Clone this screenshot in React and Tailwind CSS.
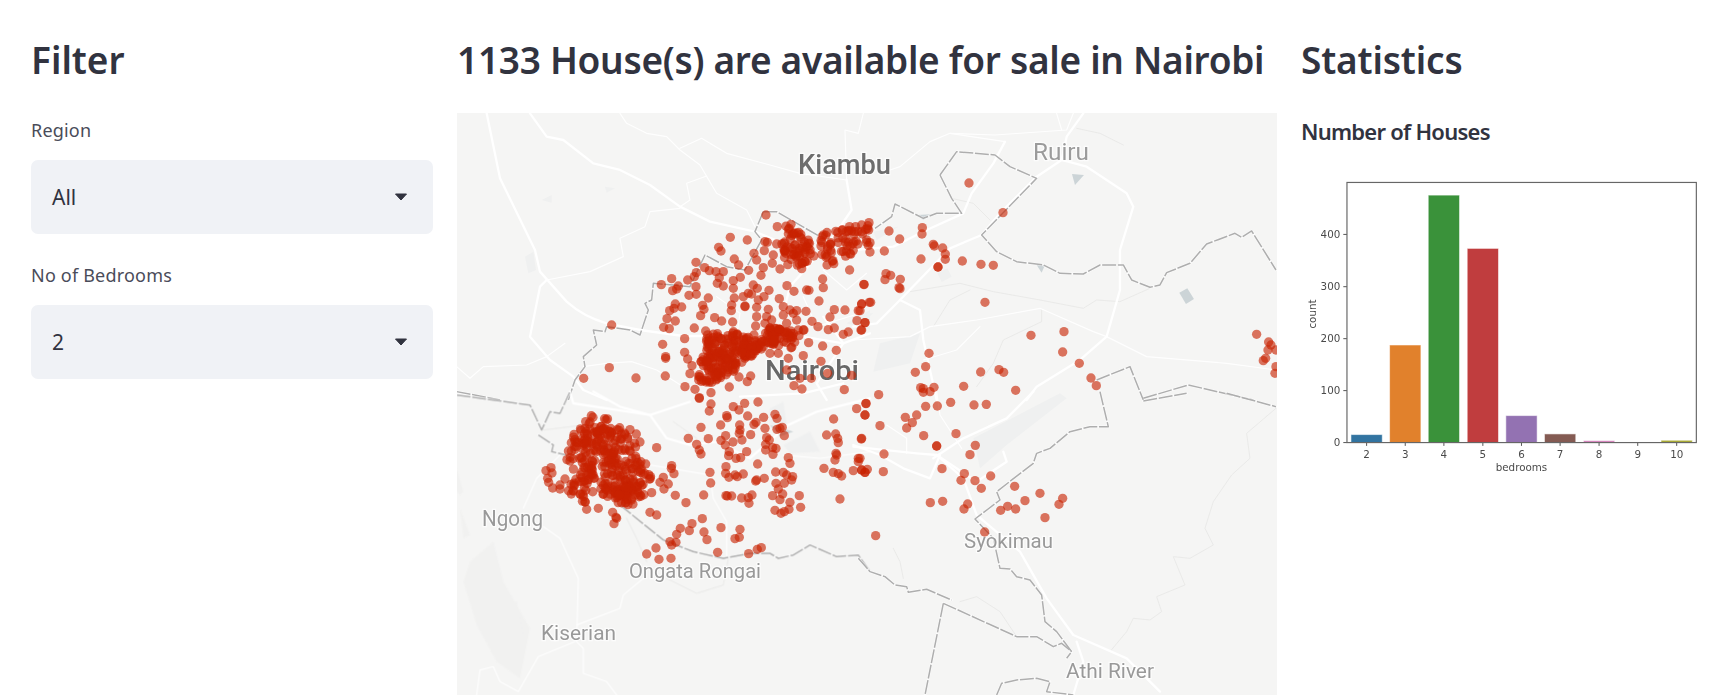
const FONT = 'font-["Noto_Sans",sans-serif]'

// map data is kept in the coordinates of four 3x crops: each crop has its own origin on the page
const CROPS = [
  {
    x: 450,
    y: 100,
    major: [
      'M110,40 L150,235 L255,450 L270,515 L350,605 Q400,650 470,670 L570,690 L700,708 L960,708',
      'M240,40 L290,110 L340,120 L430,190 L510,210 L600,255 L690,320 L780,365 L915,395 L1000,430 L1100,470',
      'M290,540 L270,560 L240,710 L300,780 L370,830 L400,870 L470,900',
      'M1190,240 L1205,330 L1150,410 L1100,470 L1020,560 L1000,640',
      'M1120,650 L1180,730 L1100,850 L1130,900',
      'M1000,700 L1180,730 L1260,700',
      'M870,890 L1060,880 L1180,850',
    ],
    minor: [
      'M290,540 L420,515 L520,470 L510,415 L585,380 L600,335 L690,325',
      'M690,320 L720,300 L710,250 L770,228',
      'M510,40 L530,70 L590,100 L650,110 L690,150 L750,195 L800,280 L890,330 L915,380',
      'M690,145 L755,115 L830,160 L960,195 L1050,220 L1190,240 L1185,90 L1225,100 L1240,40',
      'M400,800 L470,790 L545,785 L620,810 L700,860',
      'M20,800 L60,835 L100,800 L230,795 L290,770 L345,730',
      'M1120,510 L1190,570 L1250,520',
      'M800,590 L870,640 L860,710',
      'M1060,590 L1100,680 L1230,640',
    ],
    border: [
      'M940,335 L980,335 L1110,410',
      'M940,335 L915,395 L935,420 L885,510 L830,500 L765,465 L720,560 L610,550 L605,600 L585,610 L595,630 L570,705 L540,690 L470,680 L465,695 L430,690 L440,735 L400,770 L405,800 L375,840 L355,900',
      'M20,875 L150,900',
    ],
    shapes: [
      'M225,470 L250,455 L258,510 L235,520 Z',
      'M465,260 L495,265 L470,278 Z',
      'M275,300 L305,285 L305,308 Z',
      'M1190,670 L1260,630 L1260,690 Z',
    ],
    points: [
      [948,345],[982,380],[841,412],[892,420],[806,442],[813,453],[853,477],[866,495],[738,487],[764,503],[739,518],[733,530],[713,540],[778,512],[798,515],[820,515],[896,511],[871,532],[933,526],[808,533],[802,550],[820,558],[850,542],[850,565],[910,555],[634,554],[665,536],[668,572],[685,558],[680,567],[717,586],[738,560],[739,583],[775,594],[758,616],[762,628],[676,612],[672,625],[695,621],[659,632],[651,656],[676,663],[641,682],[658,686],[733,684],[752,647],[794,653],[815,663],[848,666],[844,632],[845,615],[853,594],[885,620],[885,618],[880,590],[895,580],[905,582],[922,565],[957,571],[942,590],[925,600],[920,622],[920,650],[917,678],[912,705],[767,693],[704,716],[638,733],[704,757],[647,770],[647,775],[713,777],[726,797],[720,821],[705,860],[478,803],[401,835],[558,834],[646,828],[485,675],[838,861],[867,831],[902,828],[892,845],[783,878],[748,893],[735,868],[988,596],[1011,557],[1032,574],[1070,570],[1077,571],[1107,603],[1118,537],[1120,563],[1199,510],[1242,553],[1235,612],[1258,607],[1225,632],[1185,630],[1153,629],[1140,651],[1221,662],[1245,668],[1233,690],[1153,684],[1135,689],[1180,703],[1195,696],[1104,680],[1086,664],[1062,690],[1047,707],[1076,728],[1118,738],[1159,751],[1060,767],[1113,784],[1133,820],[1205,826],[1183,869],[1084,835],[1056,867],[1032,857],[1050,835],[1000,620],[1020,630],[1040,632],[1068,634],[1000,645],[1030,640],[1040,660],[1010,670],[1045,690],[1060,690],[955,628],[950,650],[965,660],[945,670],[960,690],[945,425],[952,427],[980,432],[943,452],[912,460],[920,480],[970,465],[967,490],[940,503],[990,507],[960,760],[985,760],[1015,775],[1010,810],
    ],
    clusters: [
      { poly: [[735,850],[765,740],[770,705],[850,695],[930,720],[960,680],[1030,690],[1040,745],[950,740],[880,785],[860,810],[780,850]], n: 260, seed: 11 },
      { poly: [[990,450],[1005,360],[1075,410],[1095,480],[1060,510],[1000,490]], n: 65, seed: 5 },
      { poly: [[1110,395],[1200,370],[1260,370],[1260,450],[1190,470],[1140,510],[1110,470]], n: 60, seed: 7 },
    ],
  },
  {
    x: 860,
    y: 100,
    major: [
      'M670,40 L620,110 L605,180 L530,230 L420,340 L365,405 L270,445 L120,600 L50,670 L-20,680',
      'M605,180 L680,200 L800,280 L820,320 L780,450 L780,570 L740,710 L660,780 L530,860 L500,900',
      'M120,600 L180,630 L190,720 L230,900',
      'M435,125 L400,190 L335,280 L310,340 L200,390 L100,440 L-20,450',
    ],
    minor: [
      'M270,100 L405,105 L620,90 L640,40',
      'M435,125 L270,100 L210,125 L120,200 L90,210',
      'M740,710 L860,770 L1100,790 L1248,810',
      'M-20,720 L150,710 L210,680 L350,660 L540,625 L700,695 L740,710',
      'M190,780 L290,750 L360,680',
      'M605,90 L590,40',
    ],
    thin: [
      'M150,575 L300,550 L400,575 L540,600 L670,625 L710,600 L780,605 L870,565',
      'M220,680 L270,600 L330,570',
      'M650,85 L720,100 L790,135',
      'M275,295 L340,310 L390,360',
      'M545,630 L545,665 L430,720 L400,790 L350,860',
    ],
    border: [
      'M240,225 L290,155 L405,165 L450,200 L530,235 L365,405 L410,455 L470,485 L550,495 L600,520 L670,522 L720,495 L790,495 L815,540 L870,562 L900,555 L920,518 L990,490 L1040,432 L1125,400 L1145,412 L1175,393 L1248,510',
      'M240,225 L275,295 L305,340 L230,340 L190,355 L105,312 L95,350 L45,385',
      'M710,840 L810,800 L850,900',
      'M850,895 L985,855 L1180,900',
    ],
    water: [
      'M636,222 L672,225 L645,255 Z',
      'M958,578 L982,565 L1002,597 L978,612 Z',
      'M530,495 L555,495 L545,518 Z',
      'M172,345 L212,343 L190,360 Z',
    ],
    shapes: [
      'M60,730 L180,700 L150,790 L40,815 Z',
      'M232,520 L262,505 L275,530 L245,546 Z',
      'M40,395 L115,380 L50,420 Z',
      'M0,640 L40,640 L15,660 Z',
    ],
    points: [
      [327,249],[429,338],[87,393],[119,417],[187,383],[186,402],[220,433],[223,438],[248,444],[256,462],[256,478],[183,477],[234,501],[234,501],[307,483],[363,493],[400,496],[30,428],[20,427],[30,456],[73,453],[78,521],[92,526],[75,539],[121,538],[117,563],[120,566],[12,554],[32,607],[5,612],[0,632],[15,668],[5,690],[375,607],[513,706],[612,695],[608,756],[658,790],[693,834],[709,857],[207,760],[197,800],[166,817],[362,816],[417,809],[431,817],[467,871],[311,859],[222,862],[182,863],[190,866],[190,877],[210,875],[56,884],[1190,703],[1226,726],[1233,735],[1224,750],[1217,775],[1210,782],[1248,800],[1245,820],[1248,750],[27,368],[5,375],[22,386],[5,395],
    ],
  },
  {
    x: 450,
    y: 395,
    major: [
      'M360,-10 L370,25 L600,60 L650,130 L720,150 L800,140 L900,190 L1015,90 L1100,50 L1260,10',
      'M430,-10 L510,35 L600,60 L720,20',
    ],
    minor: [
      'M600,210 L780,240 L790,310 L830,380 L830,490',
      'M280,395 L330,430 L385,550 L380,740 L400,760 L400,835 L470,860 L500,900',
      'M375,740 L265,785 L205,890 L150,860 L130,815 L90,825 L80,900',
      'M580,550 L520,600 L510,640 L380,690',
      'M330,180 L260,250 L220,340',
      'M1000,180 L1110,190 L1260,170',
    ],
    thin: [
      'M530,370 L560,430 L590,500',
      'M650,550 L740,595 L820,570 L835,490',
      'M670,80 L740,130',
      'M280,105 L400,90',
    ],
    border: [
      'M20,0 L240,30 L275,105 L300,50 L330,55 L360,-10',
      'M265,120 L310,150 L305,170 L350,180',
      'M510,330 L640,435 L730,470 L820,490 L900,475 L960,475 L985,490 L1030,480 L1080,450 L1160,485 L1225,480 L1260,530',
    ],
    water: ['M960,90 L1030,110 L990,125 Z'],
    shapes: [
      'M960,40 L1000,20 L1010,90 L960,90 Z',
      'M1000,150 L1080,110 L1110,170 L1020,175 Z',
    ],
    hills: [
      'M60,500 L130,440 L160,560 L240,700 L210,850 L140,800 L80,690 L40,560 Z',
      'M20,220 L40,290 L30,300 L20,290 Z',
      'M30,340 L60,420 L40,430 Z',
      'M130,640 L200,620 L220,720 L150,790 Z',
    ],
    points: [
      [620,158],[715,130],[775,131],[753,97],[812,90],[830,62],[832,68],[850,35],[867,45],[884,25],[924,21],[893,63],[941,67],[918,82],[912,88],[945,100],[902,119],[869,90],[870,105],[868,115],[876,135],[827,122],[813,136],[826,150],[849,141],[740,148],[748,165],[753,177],[838,170],[836,182],[858,190],[872,188],[890,170],[923,207],[950,128],[958,135],[947,148],[947,165],[968,158],[978,160],[969,178],[975,58],[981,70],[990,100],[997,97],[981,103],[1003,122],[1015,188],[1020,205],[828,215],[827,235],[837,247],[780,232],[782,264],[855,240],[862,245],[880,237],[917,258],[920,255],[943,250],[977,231],[978,265],[1000,232],[1010,240],[1028,245],[1025,255],[1003,265],[985,282],[998,297],[968,302],[990,314],[1048,302],[1020,322],[1052,337],[1017,343],[1003,350],[993,355],[975,346],[761,300],[828,302],[832,303],[845,303],[875,309],[897,325],[895,308],[906,300],[708,323],[676,301],[665,212],[664,220],[672,236],[640,247],[630,262],[655,267],[642,282],[605,293],[600,352],[620,360],[757,371],[726,386],[691,400],[680,418],[718,407],[762,411],[771,434],[813,398],[870,403],[868,427],[855,431],[660,440],[665,450],[678,442],[618,459],[590,477],[627,493],[663,490],[803,472],[896,476],[922,463],[934,458],[1151,72],[1130,120],[1157,117],[1163,130],[1165,143],[1158,175],[1160,180],[1155,195],[1122,220],[1150,232],[1165,236],[1175,243],[1225,190],[1225,200],[1210,227],[1235,225],[1245,232],[1234,132],[1220,41],[1245,60],[1170,312],[1248,25],[748,10],[783,27],[778,48],[410,343],[445,340],[488,352],[498,367],[492,386],[500,370],
      [288,227],[303,218],[306,234],[293,250],[296,262],[308,279],[330,270],[330,282],[345,252],[540,104],[559,117],[570,141],
    ],
    clusters: [
      { poly: [[355,125],[420,60],[490,75],[560,150],[600,230],[610,270],[560,330],[490,330],[440,280],[400,260],[350,200]], n: 230, seed: 3 },
      { poly: [[390,100],[500,100],[530,170],[470,190],[400,170]], n: 45, seed: 9 },
      { poly: [[480,290],[570,250],[580,310],[510,330]], n: 35, seed: 13 },
      { poly: [[340,260],[420,240],[440,300],[400,325],[360,300]], n: 22, seed: 17 },
    ],
  },
  {
    x: 860,
    y: 395,
    major: [
      'M-20,150 L60,180 L130,220 L210,250 L240,180',
      'M-20,155 L170,175 L230,180 L350,260 L440,200 L430,170',
      'M230,180 L310,250 L350,360 L480,470 L560,610 L640,720 L800,790 L900,890',
      'M520,-10 L440,70 L310,130 L220,190',
      'M650,740 L670,800 L640,900',
    ],
    minor: [
      'M230,-10 L240,60 L305,160',
      'M80,90 L140,130 L140,175',
    ],
    thin: [
      'M1248,40 L1160,115 L1170,190 L1115,240 L1060,320 L1035,400 L1060,450 L990,490 L940,485 L975,570 L890,605 L905,650 L870,675 L820,670 L800,710 L750,770',
      'M300,620 L350,605 L420,650 L470,725',
      'M100,460 L120,500 L130,550',
    ],
    border: [
      'M720,-10 L745,95 L690,95 L670,100 L630,110 L570,160 L530,175 L520,205 L410,290 L420,315 L345,372 L400,430 L420,520 L450,522 L470,545 L510,555 L545,600 L555,680 L590,710 L635,770 L620,790',
      'M-5,490 L30,530 L75,545 L105,570 L140,575 L145,592 L200,583 L275,615',
      'M250,625 L470,725 L530,725 L580,755 L605,745 L635,770',
      'M250,625 L195,900',
      'M850,18 L980,-5',
      'M1100,-5 L1248,35',
      'M410,900 L425,865 L470,855 L530,850 L570,860 L560,890 L640,900',
    ],
    shapes: [
      'M340,130 L600,-5 L620,10 L440,150 L360,220 Z',
    ],
    points: [
      [18,26],[15,60],[60,92],[5,130],[136,67],[170,60],[157,83],[140,99],[197,34],[232,33],[272,22],[342,30],[379,28],[191,122],[288,116],[346,151],[330,179],[230,153],[230,153],[72,177],[70,230],[246,221],[313,236],[303,256],[345,257],[364,280],[392,243],[22,223],[15,232],[5,225],[0,190],[211,323],[248,319],[323,327],[312,342],[47,422],[374,411],[464,274],[540,295],[495,317],[443,334],[422,346],[467,342],[608,310],[597,328],[555,368],
    ],
  },
]

const LABELS = [
  { text: 'Kiambu', x: 798, y: 174, w: 93, size: 27, weight: 500, fill: '#6d6d6d' },
  { text: 'Ruiru', x: 1033, y: 160, w: 56, size: 24, weight: 400, fill: '#9b9b9b' },
  { text: 'Nairobi', x: 765, y: 380, w: 94, size: 27, weight: 500, fill: '#686868' },
  { text: 'Ngong', x: 482, y: 526, w: 61, size: 22, weight: 400, fill: '#999999' },
  { text: 'Ongata Rongai', x: 629, y: 578, w: 132, size: 20, weight: 400, fill: '#999999' },
  { text: 'Kiserian', x: 541, y: 640, w: 75, size: 20, weight: 400, fill: '#999999' },
  { text: 'Syokimau', x: 964, y: 548, w: 89, size: 20, weight: 400, fill: '#999999' },
  { text: 'Athi River', x: 1066, y: 678, w: 88, size: 20, weight: 400, fill: '#999999' },
]

const BARS = [
  { label: '2', cx: 257, top: 1003, color: '#3274a1' },
  { label: '3', cx: 373, top: 734, color: '#e1812c' },
  { label: '4', cx: 489, top: 284, color: '#3a923a' },
  { label: '5', cx: 606, top: 444, color: '#c03d3e' },
  { label: '6', cx: 722, top: 946, color: '#9372b2' },
  { label: '7', cx: 838, top: 1001, color: '#845b53' },
  { label: '8', cx: 955, top: 1021, color: '#d684bd' },
  { label: '9', cx: 1071, top: 1027, color: '#7f7f7f' },
  { label: '10', cx: 1188, top: 1020, color: '#a9aa35' },
]

const Y_TICKS = [
  { label: '0', y: 1027 },
  { label: '100', y: 871 },
  { label: '200', y: 715 },
  { label: '300', y: 559 },
  { label: '400', y: 402 },
]

function random(seed) {
  let s = seed * 99991
  return () => {
    s = (s + 0x6d2b79f5) | 0
    let t = Math.imul(s ^ (s >>> 15), 1 | s)
    t = (t + Math.imul(t ^ (t >>> 7), 61 | t)) ^ t
    return ((t ^ (t >>> 14)) >>> 0) / 4294967296
  }
}

function inside(poly, x, y) {
  let hit = false
  for (let i = 0, j = poly.length - 1; i < poly.length; j = i++) {
    const [ax, ay] = poly[i]
    const [bx, by] = poly[j]
    if (ay > y !== by > y && x < ((bx - ax) * (y - ay)) / (by - ay) + ax) hit = !hit
  }
  return hit
}

function scatter({ poly, n, seed }) {
  const rand = random(seed)
  const xs = poly.map((p) => p[0])
  const ys = poly.map((p) => p[1])
  const minX = Math.min(...xs)
  const maxX = Math.max(...xs)
  const minY = Math.min(...ys)
  const maxY = Math.max(...ys)
  const out = []
  while (out.length < n) {
    const x = minX + rand() * (maxX - minX)
    const y = minY + rand() * (maxY - minY)
    if (inside(poly, x, y)) out.push([x, y])
  }
  return out
}

function Layer({ paths, ...props }) {
  return (
    <g fill="none" strokeLinejoin="round" strokeLinecap="round" {...props}>
      {(paths || []).map((d) => (
        <path key={d} d={d} />
      ))}
    </g>
  )
}

function InCrop({ crop, children }) {
  return <g transform={`translate(${crop.x} ${crop.y}) scale(0.3333)`}>{children}</g>
}

function HouseMap() {
  return (
    <svg viewBox="457 113 820 582" className="block w-[820px] h-[582px] bg-[#f5f5f4]">
      <g className="blur-[0.5px]">
        {CROPS.map((crop) => (
          <InCrop key={crop.x + '-' + crop.y} crop={crop}>
            {(crop.hills || []).map((d) => (
              <path key={d} d={d} fill="#f1f1f0" />
            ))}
            {(crop.shapes || []).map((d) => (
              <path key={d} d={d} fill="#eff0f0" />
            ))}
            {(crop.water || []).map((d) => (
              <path key={d} d={d} fill="#ccd4d7" />
            ))}
            <Layer paths={crop.thin} stroke="#e4e4e3" strokeWidth="2" />
            <Layer paths={crop.minor} stroke="#ffffff" strokeWidth="3.5" opacity="0.9" />
            <Layer paths={crop.major} stroke="#ffffff" strokeWidth="7" opacity="0.95" />
            <Layer paths={crop.border} stroke="#ffffff" strokeWidth="8" opacity="0.6" />
            <Layer paths={crop.border} stroke="#aeaeae" strokeWidth="4.5" strokeDasharray="42 5" strokeLinecap="butt" />
          </InCrop>
        ))}
        {LABELS.map((l) => (
          <text
            key={l.text}
            x={l.x}
            y={l.y}
            textLength={l.w}
            lengthAdjust="spacingAndGlyphs"
            fontSize={l.size}
            fontWeight={l.weight}
            fill={l.fill}
            stroke="#ffffff"
            strokeWidth="2.5"
            strokeOpacity="0.7"
            paintOrder="stroke"
            className='font-["Roboto",sans-serif]'
          >
            {l.text}
          </text>
        ))}
        {CROPS.map((crop) => (
          <InCrop key={'dots-' + crop.x + '-' + crop.y} crop={crop}>
            <g fill="#c82200" fillOpacity="0.62">
              {crop.points.map(([x, y], i) => (
                <circle key={i} cx={x} cy={y} r="14" />
              ))}
              {(crop.clusters || []).flatMap(scatter).map(([x, y], i) => (
                <circle key={'c' + i} cx={x} cy={y} r="14" />
              ))}
            </g>
          </InCrop>
        ))}
      </g>
    </svg>
  )
}

function BedroomChart() {
  const base = 1027
  return (
    <svg viewBox="60 230 1210 900" className="block w-[403px] h-[300px] blur-[0.6px]">
      <g className='font-["DejaVu_Sans",sans-serif]' fontSize="31" fill="#4a4a4a">
        {BARS.map((b) => (
          <g key={b.label}>
            <rect
              x={b.cx - 47}
              y={b.top}
              width="94"
              height={base - b.top}
              fill={b.color}
              stroke="#ffffff"
              strokeOpacity="0.55"
              strokeWidth="3"
            />
            <line x1={b.cx} x2={b.cx} y1={base} y2={base + 10} stroke="#555555" strokeWidth="3" />
            <text x={b.cx} y={1073} textAnchor="middle">{b.label}</text>
          </g>
        ))}
        {Y_TICKS.map((t) => (
          <g key={t.label}>
            <line x1="187" x2="198" y1={t.y} y2={t.y} stroke="#555555" strokeWidth="3" />
            <text x="178" y={t.y + 11} textAnchor="end">{t.label}</text>
          </g>
        ))}
        <text x="722" y="1113" textAnchor="middle">bedrooms</text>
        <text transform="translate(104 641) rotate(-90)" textAnchor="middle">count</text>
      </g>
      <rect x="198" y="246" width="1049" height="781" fill="none" stroke="#666666" strokeWidth="3.5" />
    </svg>
  )
}

function Select({ label, value }) {
  return (
    <div className="mb-[28px]">
      <div className="h-[27px] mb-[16px] text-[18px] leading-[27px] text-[#4a4c59] tracking-[0.2px]">{label}</div>
      <div className="h-[74px] rounded-[7px] bg-[#f0f2f6] pl-[21px] pr-[25px] flex items-center justify-between">
        <span className="pt-[2px] text-[21px] text-[#31333f]">{value}</span>
        <svg width="14" height="8" viewBox="0 0 14 8">
          <path d="M1.5 1 H12.5 L7 7 Z" fill="#31333f" stroke="#31333f" strokeWidth="1" strokeLinejoin="round" />
        </svg>
      </div>
    </div>
  )
}

function Heading({ children, className }) {
  return (
    <h2 className={'h-[113px] pt-[33px] text-[37px] leading-[54px] font-semibold text-[#31333f] whitespace-nowrap ' + (className || '')}>
      {children}
    </h2>
  )
}

export default function App() {
  return (
    <div className={FONT + ' flex gap-[24px] h-[695px] overflow-hidden bg-white pl-[31px]'}>
      <div className="w-[402px] shrink-0">
        <Heading>Filter</Heading>
        <div className="pt-[4px]">
          <Select label="Region" value="All" />
          <Select label="No of Bedrooms" value="2" />
        </div>
      </div>
      <div className="w-[820px] shrink-0">
        <Heading className="tracking-[-0.28px]">1133 House(s) are available for sale in Nairobi</Heading>
        <HouseMap />
      </div>
      <div className="w-[391px] shrink-0">
        <Heading className="tracking-[-0.15px]">Statistics</Heading>
        <h3 className="h-[62px] mt-[2px] text-[22px] leading-[33px] font-semibold text-[#31333f] tracking-[-0.75px]">Number of Houses</h3>
        <BedroomChart />
      </div>
    </div>
  )
}
